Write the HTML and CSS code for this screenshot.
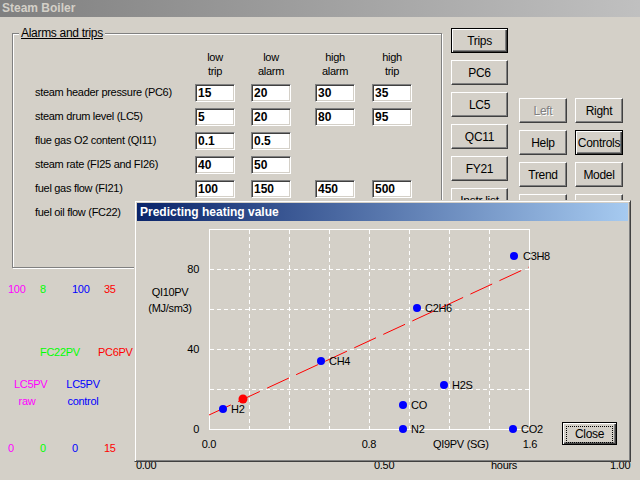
FILE: index.html
```html
<!DOCTYPE html>
<html lang="en">
<head>
    <meta charset="UTF-8">
    <title>Steam Boiler</title>
    <link rel="stylesheet" href="styles.css">
</head>
<body>
    <div class="window">
        <div class="titlebar">Steam Boiler</div>

        <div class="main">
            <fieldset class="group">
                <legend>Alarms and trips</legend>
                <div class="limits">
                    <span></span>
                    <span class="head">low<br>trip</span>
                    <span class="head">low<br>alarm</span>
                    <span class="head">high<br>alarm</span>
                    <span class="head">high<br>trip</span>

                    <span class="tag">steam header pressure (PC6)</span>
                    <input class="field" value="15"><input class="field" value="20"><input class="field" value="30"><input class="field" value="35">

                    <span class="tag">steam drum level (LC5)</span>
                    <input class="field" value="5"><input class="field" value="20"><input class="field" value="80"><input class="field" value="95">

                    <span class="tag">flue gas O2 content (QI11)</span>
                    <input class="field" value="0.1"><input class="field" value="0.5"><span></span><span></span>

                    <span class="tag">steam rate (FI25 and FI26)</span>
                    <input class="field" value="40"><input class="field" value="50"><span></span><span></span>

                    <span class="tag">fuel gas flow (FI21)</span>
                    <input class="field" value="100"><input class="field" value="150"><input class="field" value="450"><input class="field" value="500">

                    <span class="tag">fuel oil flow (FC22)</span>
                    <input class="field" value="2"><input class="field" value="3"><input class="field" value="18"><input class="field" value="20">
                </div>
            </fieldset>

            <div class="tabs">
                <button class="btn default">Trips</button>
                <button class="btn">PC6</button>
                <button class="btn">LC5</button>
                <button class="btn">QC11</button>
                <button class="btn">FY21</button>
                <button class="btn">Instr list</button>
            </div>

            <div class="nav">
                <button class="btn disabled">Left</button>
                <button class="btn">Right</button>
                <button class="btn">Help</button>
                <button class="btn default">Controls</button>
                <button class="btn">Trend</button>
                <button class="btn">Model</button>
                <button class="btn">Print</button>
                <button class="btn">Exit</button>
            </div>
        </div>

        <div class="trend">
            <span class="magenta">100</span><span class="green">8</span><span class="blue">100</span><span class="red">35</span>
            <span></span><span class="green">FC22PV</span><span></span><span class="red shift">PC6PV</span>
            <span class="magenta pair">LC5PV<br>raw</span><span></span><span class="blue pair left">LC5PV<br>control</span><span></span>
            <span class="magenta">0</span><span class="green">0</span><span class="blue">0</span><span class="red">15</span>
        </div>

        <div class="time-axis">
            <span class="t0">0.00</span>
            <span class="t1">0.50</span>
            <span class="t2">hours</span>
            <span>1.00</span>
        </div>
    </div>

    <div class="dialog">
        <div class="dialog-title">Predicting heating value</div>
        <div class="dialog-body">
            <svg class="chart" width="425" height="238" viewBox="0 0 425 238">
                <g class="grid">
                    <line x1="112" y1="8" x2="112" y2="208"/>
                    <line x1="152" y1="8" x2="152" y2="208"/>
                    <line x1="192" y1="8" x2="192" y2="208"/>
                    <line x1="232" y1="8" x2="232" y2="208"/>
                    <line x1="272" y1="8" x2="272" y2="208"/>
                    <line x1="312" y1="8" x2="312" y2="208"/>
                    <line x1="352" y1="8" x2="352" y2="208"/>
                    <line x1="72" y1="48" x2="392" y2="48"/>
                    <line x1="72" y1="88" x2="392" y2="88"/>
                    <line x1="72" y1="128" x2="392" y2="128"/>
                    <line x1="72" y1="168" x2="392" y2="168"/>
                </g>
                <rect class="frame" x="72.5" y="8.5" width="320" height="200"/>
                <line class="fit" x1="72" y1="194" x2="392" y2="46"/>

                <g class="labels">
                    <text x="62" y="52" text-anchor="end">80</text>
                    <text x="62" y="132" text-anchor="end">40</text>
                    <text x="62" y="212" text-anchor="end">0</text>
                    <text x="72" y="227" text-anchor="middle">0.0</text>
                    <text x="232" y="227" text-anchor="middle">0.8</text>
                    <text x="296" y="227">QI9PV (SG)</text>
                    <text x="393" y="227" text-anchor="middle">1.6</text>
                    <text x="33" y="75" text-anchor="middle">QI10PV</text>
                    <text x="33" y="91" text-anchor="middle">(MJ/sm3)</text>
                </g>

                <g class="points">
                    <circle cx="377" cy="35" r="4"/>
                    <circle cx="280" cy="87" r="4"/>
                    <circle cx="184" cy="140" r="4"/>
                    <circle cx="307" cy="164" r="4"/>
                    <circle cx="266" cy="184" r="4"/>
                    <circle cx="266" cy="208" r="4"/>
                    <circle cx="86" cy="188" r="4"/>
                    <circle cx="376" cy="208" r="4"/>
                </g>
                <circle class="current" cx="106" cy="178" r="4.5"/>

                <g class="labels">
                    <text x="386" y="39">C3H8</text>
                    <text x="288" y="91">C2H6</text>
                    <text x="192" y="144">CH4</text>
                    <text x="315" y="168">H2S</text>
                    <text x="274" y="188">CO</text>
                    <text x="274" y="212">N2</text>
                    <text x="94" y="192">H2</text>
                    <text x="384" y="212">CO2</text>
                </g>
            </svg>
            <button class="btn default close"><span class="focus">Close</span></button>
        </div>
    </div>
</body>
</html>
```

FILE: styles.css
```css
body {
    margin: 0;
    font-family: "Liberation Sans", Arial, sans-serif;
    font-size: 11px;
    letter-spacing: -0.3px;
    background-color: #d4d0c8;
    color: #000;
}

.window {
    width: 640px;
    height: 480px;
    overflow: hidden;
}

.titlebar {
    height: 17px;
    line-height: 17px;
    padding-left: 2px;
    font-size: 12px;
    font-weight: bold;
    letter-spacing: 0;
    color: #d4d0c8;
    background: linear-gradient(to right, #808080, #c0c0c0);
}

.main {
    display: flex;
    align-items: flex-start;
    padding: 10px 0 0 12px;
}

/* group box */
.group {
    box-sizing: border-box;
    width: 430px;
    height: 241px;
    margin: 0;
    padding: 10px 0 0 22px;
    border: 1px solid #808080;
    box-shadow: inset 1px 1px 0 #fff, 1px 1px 0 #fff;
}

    .group legend {
        margin-left: -16px;
        padding: 0 2px;
        line-height: 13px;
        font-size: 12px;
        text-decoration: underline;
        background-color: #d4d0c8;
    }

.limits {
    display: grid;
    grid-template-columns: 160px 56px 64px 57px 40px;
    grid-template-rows: 31px;
    grid-auto-rows: 24px;
    align-items: center;
}

    .limits .head {
        align-self: start;
        width: 40px;
        line-height: 14px;
        text-align: center;
    }

    .limits .tag {
        padding-bottom: 3px;
    }

.field {
    box-sizing: border-box;
    width: 40px;
    height: 18px;
    margin: 0;
    padding: 0 2px;
    font-family: "Liberation Sans", Arial, sans-serif;
    font-size: 12px;
    font-weight: bold;
    border: 1px solid;
    border-color: #808080 #fff #fff #808080;
    box-shadow: inset 1px 1px 0 #404040, inset -1px -1px 0 #d4d0c8;
    background-color: #fff;
    outline: none;
}

/* buttons */
.btn {
    box-sizing: border-box;
    margin: 0;
    padding: 0;
    font-family: "Liberation Sans", Arial, sans-serif;
    font-size: 12px;
    letter-spacing: -0.3px;
    color: #000;
    background-color: #d4d0c8;
    border: 1px solid;
    border-color: #fff #404040 #404040 #fff;
    box-shadow: inset -1px -1px 0 #808080;
}

    .btn.default {
        border-color: #000;
        box-shadow: inset 1px 1px 0 #fff, inset -1px -1px 0 #404040, inset -2px -2px 0 #808080;
    }

    .btn.disabled {
        color: #808080;
        text-shadow: 1px 1px 0 #fff;
    }

.tabs {
    display: flex;
    flex-direction: column;
    gap: 7px;
    margin: 1px 0 0 9px;
}

    .tabs .btn {
        width: 57px;
        height: 25px;
    }

.nav {
    display: grid;
    grid-template-columns: 48px 48px;
    grid-auto-rows: 25px;
    gap: 7px 8px;
    margin: 71px 0 0 11px;
}

/* trend legend under the dialog */
.trend {
    display: grid;
    grid-template-columns: 32px 32px 32px 40px;
    grid-template-rows: 63px 31px 65px 14px;
    margin: 14px 0 0 8px;
    line-height: 14px;
}

    .trend .pair {
        line-height: 17px;
        text-align: center;
        padding-left: 6px;
    }

    .trend .left {
        margin-left: -10px;
        padding-left: 0;
    }

    .trend .shift {
        margin-left: -6px;
    }

.magenta { color: #ff00ff; }
.green { color: #00ff00; }
.blue { color: #0000ff; }
.red { color: #ff0000; }

.time-axis {
    display: flex;
    margin-top: 4px;
    padding-left: 136px;
    line-height: 12px;
}

    .time-axis .t0 { width: 238px; }
    .time-axis .t1 { width: 117px; }
    .time-axis .t2 { width: 119px; }

/* dialog on top */
.dialog {
    position: absolute;
    left: 134px;
    top: 200px;
    box-sizing: border-box;
    width: 497px;
    height: 262px;
    padding: 2px;
    border: 1px solid;
    border-color: #d4d0c8 #404040 #404040 #d4d0c8;
    box-shadow: inset 1px 1px 0 #fff, inset -1px -1px 0 #808080;
    background-color: #d4d0c8;
}

.dialog-title {
    height: 18px;
    line-height: 18px;
    padding-left: 3px;
    font-size: 12px;
    font-weight: bold;
    letter-spacing: 0;
    color: #fff;
    background: linear-gradient(to right, #0a246a, #a6caf0);
}

.dialog-body {
    display: flex;
    align-items: flex-end;
    height: 238px;
}

.chart {
    display: block;
    flex: none;
}

    .chart .grid line {
        stroke: #fff;
        stroke-width: 1;
        stroke-dasharray: 4 3;
        shape-rendering: crispEdges;
        transform: translate(0.5px, 0.5px);
    }

    .chart .frame {
        fill: none;
        stroke: #fff;
        stroke-width: 1;
        shape-rendering: crispEdges;
    }

    .chart .fit {
        stroke: #ff0000;
        stroke-width: 1;
        stroke-dasharray: 24 8;
    }

    .chart .points circle {
        fill: #0000ff;
    }

    .chart .current {
        fill: #ff0000;
    }

    .chart .labels text {
        font-family: "Liberation Sans", Arial, sans-serif;
        font-size: 11px;
        fill: #000;
    }

.close {
    width: 55px;
    height: 23px;
    margin-bottom: 14px;
    padding: 3px;
}

    .close .focus {
        display: block;
        height: 15px;
        line-height: 15px;
        border: 1px dotted #000;
    }
```
